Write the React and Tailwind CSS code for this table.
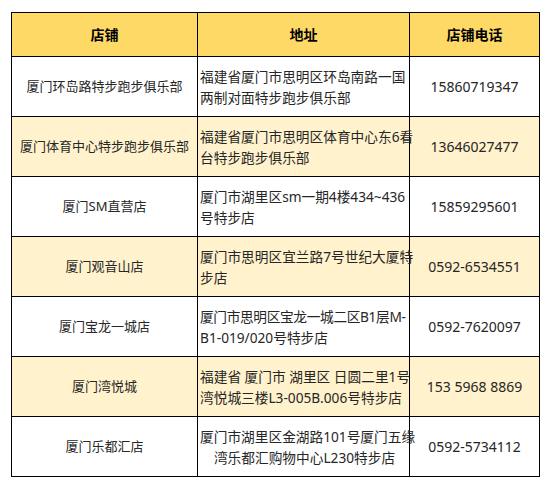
import React from 'react';

const stores = [
  { name: '厦门环岛路特步跑步俱乐部', addr: ['福建省厦门市思明区环岛南路一国', '两制对面特步跑步俱乐部'], phone: '15860719347' },
  { name: '厦门体育中心特步跑步俱乐部', addr: ['福建省厦门市思明区体育中心东6看', '台特步跑步俱乐部'], phone: '13646027477' },
  { name: '厦门SM直营店', addr: ['厦门市湖里区sm一期4楼434~436', '号特步店'], phone: '15859295601' },
  { name: '厦门观音山店', addr: ['厦门市思明区宜兰路7号世纪大厦特', '步店'], phone: '0592-6534551' },
  { name: '厦门宝龙一城店', addr: ['厦门市思明区宝龙一城二区B1层M-', 'B1-019/020号特步店'], phone: '0592-7620097', tight: true },
  { name: '厦门湾悦城', addr: ['福建省 厦门市 湖里区 日圆二里1号', '湾悦城三楼L3-005B.006号特步店'], phone: '153 5968 8869' },
  { name: '厦门乐都汇店', addr: ['厦门市湖里区金湖路101号厦门五缘', '湾乐都汇购物中心L230特步店'], phone: '0592-5734112', center: true },
];

const font = { fontFamily: '"Noto Sans", "Noto Sans CJK SC", sans-serif' };

export default function App() {
  return (
    <div className="w-[551px] h-[489px] bg-white pt-[12px] pl-[11px]" style={font}>
      <table className="table-fixed border-collapse w-[528px] text-[#262626]">
        <colgroup>
          <col className="w-[186px]" />
          <col className="w-[212px]" />
          <col className="w-[130px]" />
        </colgroup>
        <thead>
          <tr className="h-[44px] bg-[#ffd966] text-[14px] font-bold text-black">
            <th className="border border-black">店铺</th>
            <th className="border border-black">地址</th>
            <th className="border border-black">店铺电话</th>
          </tr>
        </thead>
        <tbody>
          {stores.map((s, i) => (
            <tr key={i} className={i % 2 === 1 ? 'h-[60px] bg-[#fff2cc]' : 'h-[60px] bg-white'}>
              <td className="border border-black text-center text-[13px] whitespace-nowrap">{s.name}</td>
              <td className={`border border-black pl-[2px] text-[13.7px] leading-[21px] whitespace-nowrap ${s.center ? 'text-center' : 'text-left'}`}>
                <span className={s.tight ? 'tracking-[-0.35px]' : ''}>{s.addr[0]}</span>
                <br />
                {s.addr[1]}
              </td>
              <td className="border border-black text-center text-[14px] whitespace-nowrap">{s.phone}</td>
            </tr>
          ))}
        </tbody>
      </table>
    </div>
  );
}
